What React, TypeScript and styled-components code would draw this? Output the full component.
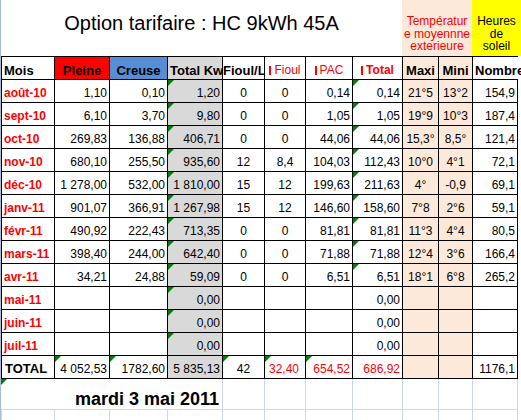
import styled, { createGlobalStyle, css } from "styled-components";

const RED = "#ff0000";
const BLUE = "#558ed5";
const GRAY = "#d9d9d9";
const PEACH = "#fde9d9";
const YELLOW = "#ffff00";
const GRID = "#d0d7e5";
const COLS = "53px 55px 58px 55px 42px 41px 47px 50px 36px 34px 46px";

const GlobalStyle = createGlobalStyle`
  html, body {
    margin: 0;
    padding: 0;
    background: #fff;
  }
  body {
    font-family: "Liberation Sans", Arial, sans-serif;
    color: #000;
  }
`;

type Row = {
  m: string;
  p?: string;
  c?: string;
  t: string;
  fl?: string;
  f?: string;
  pac?: string;
  tot: string;
  max?: string;
  min?: string;
  n?: string;
  flagTot?: boolean;
};

const rows: Row[] = [
  { m: "août-10", p: "1,10", c: "0,10", t: "1,20", fl: "0", f: "0", pac: "0,14", tot: "0,14", max: "21°5", min: "13°2", n: "154,9", flagTot: true },
  { m: "sept-10", p: "6,10", c: "3,70", t: "9,80", fl: "0", f: "0", pac: "1,05", tot: "1,05", max: "19°9", min: "10°3", n: "187,4", flagTot: true },
  { m: "oct-10", p: "269,83", c: "136,88", t: "406,71", fl: "0", f: "0", pac: "44,06", tot: "44,06", max: "15,3°", min: "8,5°", n: "121,4", flagTot: true },
  { m: "nov-10", p: "680,10", c: "255,50", t: "935,60", fl: "12", f: "8,4", pac: "104,03", tot: "112,43", max: "10°0", min: "4°1", n: "72,1", flagTot: true },
  { m: "déc-10", p: "1\u00a0278,00", c: "532,00", t: "1\u00a0810,00", fl: "15", f: "12", pac: "199,63", tot: "211,63", max: "4°", min: "-0,9", n: "69,1", flagTot: true },
  { m: "janv-11", p: "901,07", c: "366,91", t: "1\u00a0267,98", fl: "15", f: "12", pac: "146,60", tot: "158,60", max: "7°8", min: "2°6", n: "59,1", flagTot: true },
  { m: "févr-11", p: "490,92", c: "222,43", t: "713,35", fl: "0", f: "0", pac: "81,81", tot: "81,81", max: "11°3", min: "4°4", n: "80,5", flagTot: true },
  { m: "mars-11", p: "398,40", c: "244,00", t: "642,40", fl: "0", f: "0", pac: "71,88", tot: "71,88", max: "12°4", min: "3°6", n: "166,4", flagTot: true },
  { m: "avr-11", p: "34,21", c: "24,88", t: "59,09", fl: "0", f: "0", pac: "6,51", tot: "6,51", max: "18°1", min: "6°8", n: "265,2", flagTot: true },
  { m: "mai-11", t: "0,00", tot: "0,00" },
  { m: "juin-11", t: "0,00", tot: "0,00" },
  { m: "juil-11", t: "0,00", tot: "0,00" },
];

export default function App() {
  return (
    <>
      <GlobalStyle />
      <Sheet>
        <TopBand>
          <Title>Option tarifaire : HC 9kWh 45A</Title>
          <Note $bg={PEACH} $color={RED}>
            <span>Températur</span>
            <span>e moyennne</span>
            <span>exterieure</span>
          </Note>
          <Note $bg={YELLOW}>
            <span>Heures</span>
            <span>de</span>
            <span>soleil</span>
          </Note>
        </TopBand>

        <Table>
          <HeadCell>Mois</HeadCell>
          <HeadCell $bg={RED} $align="center">Pleine</HeadCell>
          <HeadCell $bg={BLUE} $align="center">Creuse</HeadCell>
          <HeadCell $bg={GRAY}>Total Kw</HeadCell>
          <HeadCell $pad={0}>Fioul/L</HeadCell>
          <HeadCell $align="center" $color={RED} $light>
            <Bar />Fioul
          </HeadCell>
          <HeadCell $align="center" $color={RED} $light>
            <Bar />PAC
          </HeadCell>
          <HeadCell $align="center" $color={RED} $small>
            <Bar />Total
          </HeadCell>
          <HeadCell $bg={PEACH} $align="center">Maxi</HeadCell>
          <HeadCell $bg={PEACH} $align="center">Mini</HeadCell>
          <HeadCell $spill>Nombre</HeadCell>

          {rows.map((r) => (
            <Line key={r.m} r={r} />
          ))}

          <Cell $bottom>
            <TotalLabel>TOTAL</TotalLabel>
          </Cell>
          <Cell $bottom $align="right" $flag>4&nbsp;052,53</Cell>
          <Cell $bottom $align="right" $flag>1782,60</Cell>
          <Cell $bottom $align="right" $bg={GRAY}>5&nbsp;835,13</Cell>
          <Cell $bottom $align="center" $flag>42</Cell>
          <Cell $bottom $align="right" $color={RED} $pad={6} $flag>32,40</Cell>
          <Cell $bottom $align="right" $color={RED} $flag>654,52</Cell>
          <Cell $bottom $align="right" $color={RED}>686,92</Cell>
          <Cell $bottom $bg={PEACH} />
          <Cell $bottom $bg={PEACH} />
          <Cell $bottom $last $align="right">1176,1</Cell>
        </Table>

        <DateBand>
          <DateCell>mardi 3 mai 2011</DateCell>
          {Array.from({ length: 7 }).map((_, i) => (
            <GridCell key={i} $last={i === 6} />
          ))}
        </DateBand>
        <FillBand>
          {Array.from({ length: 11 }).map((_, i) => (
            <GridCell key={i} $last={i === 10} $open />
          ))}
        </FillBand>
      </Sheet>
    </>
  );
}

const Line = ({ r }: { r: Row }) => (
  <>
    <Cell $color={RED} $bold>{r.m}</Cell>
    <Cell $align="right">{r.p}</Cell>
    <Cell $align="right">{r.c}</Cell>
    <Cell $align="right" $bg={GRAY} $flag>{r.t}</Cell>
    <Cell $align="center">{r.fl}</Cell>
    <Cell $align="center">{r.f}</Cell>
    <Cell $align="right">{r.pac}</Cell>
    <Cell $align="right" $flag={r.flagTot}>{r.tot}</Cell>
    <Cell $align="center" $bg={PEACH}>{r.max}</Cell>
    <Cell $align="center" $bg={PEACH}>{r.min}</Cell>
    <Cell $align="right" $last>{r.n}</Cell>
  </>
);

const Sheet = styled.div`
  width: 521px;
  height: 420px;
  box-sizing: border-box;
  border-left: 1px solid #a9bcd9;
  overflow: hidden;
  background: #fff;
`;

const TopBand = styled.div`
  display: grid;
  grid-template-columns: 401px 70px 1fr;
  height: 56px;
`;

const Title = styled.div`
  text-align: center;
  font-size: 20px;
  line-height: 23px;
  padding-top: 12px;
`;

const Note = styled.div<{ $bg: string; $color?: string }>`
  display: flex;
  flex-direction: column;
  justify-content: flex-end;
  align-items: center;
  padding-bottom: 3px;
  background: ${(p) => p.$bg};
  color: ${(p) => p.$color || "#000"};
  font-size: 12px;
  line-height: 12.75px;
  box-sizing: border-box;
`;

const Table = styled.div`
  display: grid;
  grid-template-columns: ${COLS};
`;

type CellProps = {
  $bg?: string;
  $align?: "left" | "center" | "right";
  $color?: string;
  $bold?: boolean;
  $flag?: boolean;
  $last?: boolean;
  $bottom?: boolean;
  $pad?: number;
};

const flagMark = css`
  &::before {
    content: "";
    position: absolute;
    top: 0;
    left: 0;
    border-top: 6px solid #008000;
    border-right: 6px solid transparent;
  }
`;

const Cell = styled.div<CellProps>`
  position: relative;
  box-sizing: border-box;
  height: ${(p) => (p.$bottom ? 24 : 23)}px;
  border-left: 1px solid #000;
  border-top: 1px solid #000;
  border-right: ${(p) => (p.$last ? "1px solid #000" : "none")};
  border-bottom: ${(p) => (p.$bottom ? "1px solid #000" : "none")};
  background: ${(p) => p.$bg || "#fff"};
  color: ${(p) => p.$color || "#000"};
  font-size: 12px;
  font-weight: ${(p) => (p.$bold ? 700 : 400)};
  line-height: 14px;
  display: flex;
  align-items: flex-end;
  justify-content: ${(p) =>
    p.$align === "right" ? "flex-end" : p.$align === "center" ? "center" : "flex-start"};
  padding: 0 ${(p) => p.$pad ?? 2}px 2px;
  white-space: nowrap;
  overflow: hidden;
  ${(p) => p.$flag && flagMark}
`;

const HeadCell = styled.div<CellProps & { $spill?: boolean; $light?: boolean; $small?: boolean }>`
  box-sizing: border-box;
  height: 23px;
  border-left: 1px solid #000;
  border-top: 1px solid #000;
  background: ${(p) => p.$bg || "#fff"};
  color: ${(p) => p.$color || "#000"};
  font-size: ${(p) => (p.$light || p.$small ? 12 : 13)}px;
  font-weight: ${(p) => (p.$light ? 400 : 700)};
  line-height: 15px;
  display: flex;
  align-items: flex-end;
  justify-content: ${(p) => (p.$align === "center" ? "center" : "flex-start")};
  padding: 0 ${(p) => p.$pad ?? 2}px 1px;
  white-space: nowrap;
  overflow: ${(p) => (p.$spill ? "visible" : "hidden")};
`;

const Bar = styled.span`
  display: inline-block;
  width: 2px;
  height: 9px;
  margin-right: 3px;
  margin-bottom: 3px;
  background: ${RED};
`;

const TotalLabel = styled.span`
  font-size: 13px;
  font-weight: 700;
  padding-left: 1px;
`;

const DateBand = styled.div`
  display: grid;
  grid-template-columns: ${COLS};
  height: 31px;
`;

const DateCell = styled.div`
  grid-column: span 4;
  position: relative;
  box-sizing: border-box;
  border-bottom: 1px solid ${GRID};
  display: flex;
  align-items: flex-end;
  justify-content: flex-end;
  padding-right: 3px;
  font-size: 18px;
  font-weight: 700;
  line-height: 20px;
  white-space: nowrap;
  ${flagMark}
`;

const GridCell = styled.div<{ $last?: boolean; $open?: boolean }>`
  box-sizing: border-box;
  border-left: 1px solid ${GRID};
  border-right: ${(p) => (p.$last ? `1px solid ${GRID}` : "none")};
  border-bottom: ${(p) => (p.$open ? "none" : `1px solid ${GRID}`)};
`;

const FillBand = styled.div`
  display: grid;
  grid-template-columns: ${COLS};
  height: 11px;
`;
